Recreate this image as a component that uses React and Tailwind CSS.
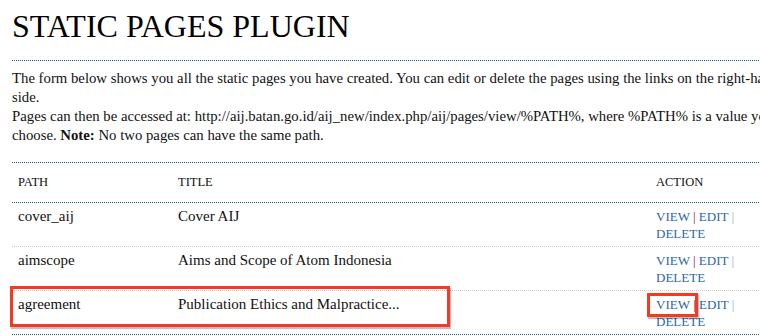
import React from "react";

const rows = [
  { path: "cover_aij", title: "Cover AIJ" },
  { path: "aimscope", title: "Aims and Scope of Atom Indonesia" },
  { path: "agreement", title: "Publication Ethics and Malpractice...", hl: true },
];

function Actions({ hl }) {
  return (
    <div className="text-[13px] leading-[17px] text-[#2b67a4]">
      <div className="whitespace-nowrap">
        <span className={hl ? "relative" : ""}>
          VIEW
          {hl && (
            <span className="absolute left-[-9px] top-[-4px] w-[51px] h-[24px] border-[3px] border-[#f23b22] shadow-[1px_2px_1px_rgba(0,0,0,0.25)]"></span>
          )}
        </span>
        <span className="text-[#8a1a1a]"> | </span>EDIT<span className="text-[#7fb0dc]"> |</span>
      </div>
      <div>DELETE</div>
    </div>
  );
}

export default function App() {
  return (
    <div className="w-[760px] h-[336px] overflow-hidden bg-white" style={{ fontFamily: '"Liberation Serif", "Times New Roman", serif' }}>
      <div className="w-[807px] pl-[12px] text-[#111]">
        <h1 className="text-[32px] leading-[36px] pt-[8px] text-black">STATIC PAGES PLUGIN</h1>
        <div className="mt-[16px] border-t border-dotted border-[#1d5c7e]"></div>
        <p className="mt-[8px] text-[14.75px] leading-[19px]">
          The form below shows you all the static pages you have created. You can edit or delete the pages using the links on the right-hand side.
          <br />
          Pages can then be accessed at: http://aij.batan.go.id/aij_new/index.php/aij/pages/view/%PATH%, where %PATH% is a value you choose. <b>Note:</b> No two pages can have the same path.
        </p>
        <div className="mt-[17px] border-t border-dotted border-[#1d5c7e]">
          <div className="flex h-[40px] items-center text-[12.5px] border-b border-dotted border-[#1d5c7e]">
            <div className="w-[160px] pl-[6px]">PATH</div>
            <div className="w-[478px] pl-[6px]">TITLE</div>
            <div className="pl-[6px]">ACTION</div>
          </div>
          {rows.map((r, i) => (
            <div
              key={r.path}
              className={
                "relative flex pt-[5px] pb-[4px] " +
                (i < rows.length - 1 ? "border-b border-dotted border-[#cfcabd]" : "border-b border-dotted border-[#1d5c7e]")
              }
            >
              {r.hl && (
                <span className="absolute left-[-2px] top-[-5px] w-[440px] h-[41px] border-[3px] border-[#f23b22] shadow-[1px_2px_1px_rgba(0,0,0,0.25)]"></span>
              )}
              <div className="w-[160px] pl-[6px] text-[15px] leading-[17px]">{r.path}</div>
              <div className="w-[478px] pl-[6px] text-[15px] leading-[17px]">{r.title}</div>
              <div className="pl-[6px]">
                <Actions hl={r.hl} />
              </div>
            </div>
          ))}
        </div>
      </div>
    </div>
  );
}
